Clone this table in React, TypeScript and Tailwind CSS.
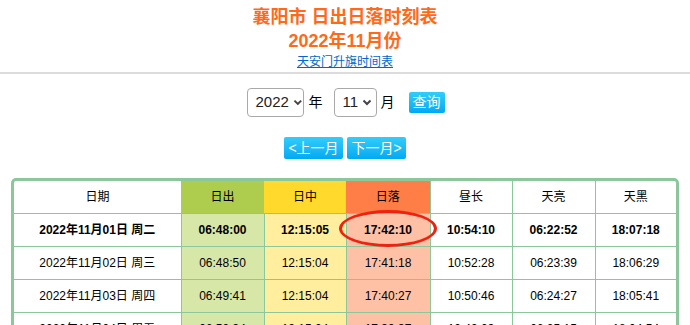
import React from "react";

const font = { fontFamily: '"Liberation Sans", "Noto Sans CJK SC", sans-serif' };

function Chevron() {
  return (
    <svg width="10" height="7" viewBox="0 0 10 7" className="ml-[4px]">
      <path d="M1.5 1.5 L5 5 L8.5 1.5" stroke="#444" strokeWidth="2" fill="none" />
    </svg>
  );
}

const rows = [
  { d: "2022年11月01日 周二", rise: "06:48:00", noon: "12:15:05", set: "17:42:10", len: "10:54:10", dawn: "06:22:52", dusk: "18:07:18", bold: true },
  { d: "2022年11月02日 周三", rise: "06:48:50", noon: "12:15:04", set: "17:41:18", len: "10:52:28", dawn: "06:23:39", dusk: "18:06:29" },
  { d: "2022年11月03日 周四", rise: "06:49:41", noon: "12:15:04", set: "17:40:27", len: "10:50:46", dawn: "06:24:27", dusk: "18:05:41" },
  { d: "2022年11月04日 周五", rise: "06:50:34", noon: "12:15:04", set: "17:39:37", len: "10:49:03", dawn: "06:25:15", dusk: "18:04:54" },
];

export default function App() {
  return (
    <div className="w-[690px] h-[325px] overflow-hidden bg-white text-black" style={font}>
      <div className="flex flex-col items-center">
        <div className="mt-[5px] h-[24px] leading-[24px] text-[18px] font-bold text-[#ff6a1a]">襄阳市 日出日落时刻表</div>
        <div className="h-[24px] leading-[24px] text-[18px] font-bold text-[#ff6a1a]">2022年11月份</div>
        <a className="h-[18px] leading-[18px] text-[12px] text-[#0066cc] underline">天安门升旗时间表</a>
      </div>
      <div className="mt-[1px] h-[2px] bg-[#dcdcdc]" />
      <div className="mt-[14px] flex items-center justify-center h-[29px]">
        <div className="ml-[1px] w-[57px] h-[29px] border border-[#a9a9a9] rounded-[4px] flex items-center pl-[8px] text-[15px] text-[#222]">
          2022<Chevron />
        </div>
        <span className="ml-[5px] text-[14px]">年</span>
        <div className="ml-[11px] w-[43px] h-[29px] border border-[#a9a9a9] rounded-[4px] flex items-center pl-[8px] text-[15px] text-[#222]">
          11<Chevron />
        </div>
        <span className="ml-[4px] text-[14px]">月</span>
        <div className="ml-[14px] w-[36px] h-[21px] rounded-[2px] bg-gradient-to-b from-[#30cdfb] to-[#00a9f2] text-white text-[14px] leading-[21px] text-center">查询</div>
      </div>
      <div className="mt-[20px] flex justify-center gap-[4px] h-[22px]">
        <div className="w-[59px] h-[22px] rounded-[2px] bg-gradient-to-b from-[#30cdfb] to-[#00a9f2] text-white text-[14px] leading-[22px] text-center">&lt;上一月</div>
        <div className="w-[59px] h-[22px] rounded-[2px] bg-gradient-to-b from-[#30cdfb] to-[#00a9f2] text-white text-[14px] leading-[22px] text-center">下一月&gt;</div>
      </div>
      <div className="relative mx-[11px] mt-[19px] border-[3px] border-[#8cc79b] rounded-[5px] overflow-hidden">
        <table className="w-full border-collapse text-[12px] table-fixed text-black">
          <colgroup>
            <col className="w-[167px]" />
            <col className="w-[83px]" />
            <col className="w-[82px]" />
            <col className="w-[84px]" />
            <col className="w-[82px]" />
            <col className="w-[83px]" />
            <col />
          </colgroup>
          <thead>
            <tr className="h-[32px]">
              <th className="font-normal text-black border-b border-[#8cc79b]">日期</th>
              <th className="font-normal text-black bg-[#aecd4e] border-b border-[#8cc79b]">日出</th>
              <th className="font-normal text-black bg-[#ffd92c] border-b border-[#8cc79b]">日中</th>
              <th className="font-normal text-black bg-[#ff7d46] border-b border-[#8cc79b]">日落</th>
              <th className="font-normal text-black border-b border-l border-[#8cc79b]">昼长</th>
              <th className="font-normal text-black border-b border-l border-[#8cc79b]">天亮</th>
              <th className="font-normal text-black border-b border-l border-[#8cc79b]">天黑</th>
            </tr>
          </thead>
          <tbody>
            {rows.map((r, i) => (
              <tr key={i} className={`h-[33px] ${r.bold ? "font-bold" : ""}`}>
                <td className="text-center border-b border-[#8cc79b]">{r.d}</td>
                <td className="text-center bg-[#d6e7a8] border-b border-l border-[#8cc79b]">{r.rise}</td>
                <td className="text-center bg-[#ffee9e] border-b border-l border-[#8cc79b]">{r.noon}</td>
                <td className="text-center bg-[#ffc1a6] border-b border-l border-[#8cc79b]">{r.set}</td>
                <td className="text-center border-b border-l border-[#8cc79b]">{r.len}</td>
                <td className="text-center border-b border-l border-[#8cc79b]">{r.dawn}</td>
                <td className="text-center border-b border-l border-[#8cc79b]">{r.dusk}</td>
              </tr>
            ))}
          </tbody>
        </table>
        <div className="absolute left-[325px] top-[29px] w-[98px] h-[37px] rounded-[50%] border-[3px] border-[#ee2211]" />
      </div>
    </div>
  );
}
